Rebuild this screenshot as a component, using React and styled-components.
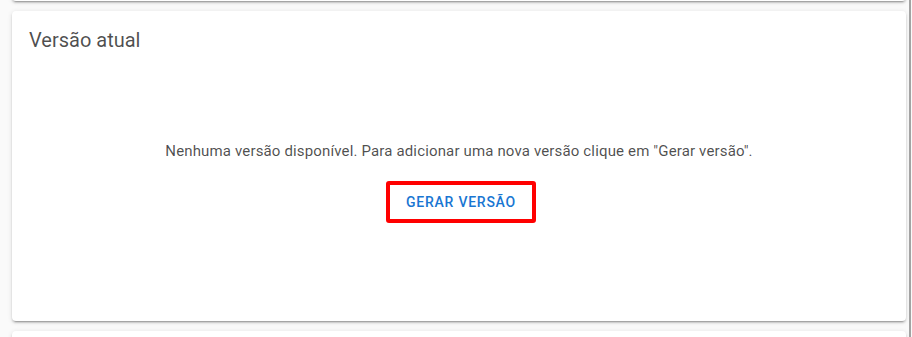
import React from 'react';
import styled, { createGlobalStyle } from 'styled-components';

const GlobalStyle = createGlobalStyle`
  html, body {
    margin: 0;
    padding: 0;
    background: #fafafa;
    font-family: Roboto, "Liberation Sans", Arial, sans-serif;
    overflow: hidden;
  }
`;

const Page = styled.div`
  width: 911px;
  height: 337px;
  box-sizing: border-box;
  border-right: 2px solid #a3a3a3;
  padding: 0 3px 0 12px;
  overflow: hidden;
`;

const Stack = styled.div`
  display: flex;
  flex-direction: column;
  gap: 10px;
  margin-top: -99px;
`;

const Card = styled.section`
  background: #fff;
  border-radius: 4px;
  box-shadow: 0 3px 1px -2px rgba(0, 0, 0, 0.2), 0 2px 2px 0 rgba(0, 0, 0, 0.14),
    0 1px 5px 0 rgba(0, 0, 0, 0.12);
  box-sizing: border-box;
  height: ${(p) => p.$height}px;
  padding: 16px 17px;
  display: flex;
  flex-direction: column;
`;

const Title = styled.h2`
  margin: 0;
  font-size: 20px;
  line-height: 26px;
  font-weight: 400;
  color: rgba(0, 0, 0, 0.7);
`;

const Empty = styled.div`
  display: flex;
  flex-direction: column;
  align-items: center;
  padding-top: 88px;
  gap: 20px;
`;

const Message = styled.p`
  margin: 0;
  font-size: 15px;
  line-height: 20px;
  letter-spacing: 0.15px;
  color: rgba(0, 0, 0, 0.7);
`;

const Highlight = styled.div`
  border: 4px solid #ff0000;
  border-radius: 3px;
  margin-left: 4px;
`;

const TextButton = styled.button`
  display: flex;
  align-items: center;
  justify-content: center;
  height: 34px;
  width: 142px;
  padding: 0;
  border: none;
  background: transparent;
  font-family: Roboto, "Liberation Sans", Arial, sans-serif;
  font-size: 14px;
  font-weight: 500;
  letter-spacing: 0.75px;
  text-transform: uppercase;
  color: #1976d2;
  cursor: pointer;
`;

export default function App() {
  return (
    <>
      <GlobalStyle />
      <Page>
        <Stack>
          <Card $height={100} />
          <Card $height={310}>
            <Title>Versão atual</Title>
            <Empty>
              <Message>
                Nenhuma versão disponível. Para adicionar uma nova versão clique em "Gerar versão".
              </Message>
              <Highlight>
                <TextButton>Gerar versão</TextButton>
              </Highlight>
            </Empty>
          </Card>
          <Card $height={100} />
        </Stack>
      </Page>
    </>
  );
}
